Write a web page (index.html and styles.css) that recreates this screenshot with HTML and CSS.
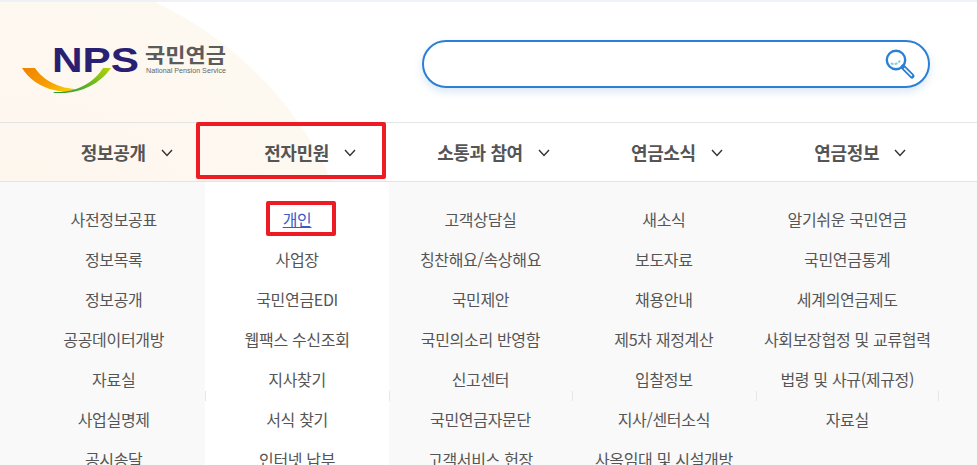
FILE: index.html
```html
<!DOCTYPE html>
<html lang="ko">
<head>
    <meta charset="UTF-8">
    <title>국민연금공단</title>
    <link rel="stylesheet" href="styles.css">
</head>
<body>
    <div class="page">
        <div class="top">
            <header class="header">
                <a class="logo" href="#">
                    <svg width="210" height="52" viewBox="0 0 210 52">
                        <defs>
                            <linearGradient id="swooshOrange" x1="0" y1="0" x2="1" y2="0.6">
                                <stop offset="0" stop-color="#f08300"/>
                                <stop offset="0.6" stop-color="#f59c00"/>
                                <stop offset="1" stop-color="#fbc600"/>
                            </linearGradient>
                            <linearGradient id="swooshGreen" x1="1" y1="0" x2="0" y2="1">
                                <stop offset="0" stop-color="#b5d20a"/>
                                <stop offset="0.55" stop-color="#5fb525"/>
                                <stop offset="1" stop-color="#1f9a38"/>
                            </linearGradient>
                        </defs>
                        <path d="M0 24 L13 24 C21 36 37 45 56 45 C46 48 38 48 32 46 C18 43 7 35 0 24Z" fill="url(#swooshOrange)"/>
                        <path d="M81 24 L89 24 C78 40 58 50 36 49 C33 49 32 49 31 48 C56 49 72 38 81 24Z" fill="url(#swooshGreen)"/>
                        <text class="logo-nps" x="30" y="28" textLength="87" lengthAdjust="spacingAndGlyphs">NPS</text>
                        <text class="logo-ko" x="123" y="19" textLength="81" lengthAdjust="spacingAndGlyphs">국민연금</text>
                        <text class="logo-en" x="124" y="29" textLength="80" lengthAdjust="spacingAndGlyphs">National Pension Service</text>
                    </svg>
                </a>
                <form class="search">
                    <button class="search-btn" type="button" aria-label="검색">
                        <svg width="32" height="32" viewBox="0 0 32 32" fill="none">
                            <circle cx="12" cy="12" r="9.2" stroke="#2b7fd4" stroke-width="2.4"/>
                            <path d="M6.8 15.2 C9 16.6 13.5 16.6 16 12.4" stroke="#85d3da" stroke-width="2" stroke-dasharray="3 1"/>
                            <path d="M19 19 L28 28" stroke="#2b7fd4" stroke-width="5" stroke-linecap="round"/>
                            <path d="M20.5 20.5 L27.5 27.5" stroke="#fff" stroke-width="1.4" stroke-linecap="round"/>
                        </svg>
                    </button>
                </form>
            </header>
            <nav class="nav">
                <a class="nav-item" href="#">정보공개<svg class="chev" width="12" height="8" viewBox="0 0 12 8"><path d="M1 1 L6 6.5 L11 1" fill="none" stroke="#333" stroke-width="1.4"/></svg></a>
                <a class="nav-item" href="#">전자민원<svg class="chev" width="12" height="8" viewBox="0 0 12 8"><path d="M1 1 L6 6.5 L11 1" fill="none" stroke="#333" stroke-width="1.4"/></svg></a>
                <a class="nav-item" href="#">소통과 참여<svg class="chev" width="12" height="8" viewBox="0 0 12 8"><path d="M1 1 L6 6.5 L11 1" fill="none" stroke="#333" stroke-width="1.4"/></svg></a>
                <a class="nav-item" href="#">연금소식<svg class="chev" width="12" height="8" viewBox="0 0 12 8"><path d="M1 1 L6 6.5 L11 1" fill="none" stroke="#333" stroke-width="1.4"/></svg></a>
                <a class="nav-item" href="#">연금정보<svg class="chev" width="12" height="8" viewBox="0 0 12 8"><path d="M1 1 L6 6.5 L11 1" fill="none" stroke="#333" stroke-width="1.4"/></svg></a>
            </nav>
        </div>
        <div class="menu">
            <ul class="col">
                <li><a href="#">사전정보공표</a></li>
                <li><a href="#">정보목록</a></li>
                <li><a href="#">정보공개</a></li>
                <li><a href="#">공공데이터개방</a></li>
                <li><a href="#">자료실</a></li>
                <li><a href="#">사업실명제</a></li>
                <li><a href="#">공시송달</a></li>
            </ul>
            <ul class="col col-on">
                <li><a class="current" href="#">개인</a></li>
                <li><a href="#">사업장</a></li>
                <li><a href="#">국민연금EDI</a></li>
                <li><a href="#">웹팩스 수신조회</a></li>
                <li><a href="#">지사찾기</a></li>
                <li><a href="#">서식 찾기</a></li>
                <li><a href="#">인터넷 납부</a></li>
            </ul>
            <ul class="col">
                <li><a href="#">고객상담실</a></li>
                <li><a href="#">칭찬해요/속상해요</a></li>
                <li><a href="#">국민제안</a></li>
                <li><a href="#">국민의소리 반영함</a></li>
                <li><a href="#">신고센터</a></li>
                <li><a href="#">국민연금자문단</a></li>
                <li><a href="#">고객서비스 헌장</a></li>
            </ul>
            <ul class="col">
                <li><a href="#">새소식</a></li>
                <li><a href="#">보도자료</a></li>
                <li><a href="#">채용안내</a></li>
                <li><a href="#">제5차 재정계산</a></li>
                <li><a href="#">입찰정보</a></li>
                <li><a href="#">지사/센터소식</a></li>
                <li><a href="#">사옥임대 및 시설개방</a></li>
            </ul>
            <ul class="col">
                <li><a href="#">알기쉬운 국민연금</a></li>
                <li><a href="#">국민연금통계</a></li>
                <li><a href="#">세계의연금제도</a></li>
                <li><a href="#">사회보장협정 및 교류협력</a></li>
                <li><a href="#">법령 및 사규(제규정)</a></li>
                <li><a href="#">자료실</a></li>
            </ul>
        </div>
        <div class="mark mark-nav"></div>
        <div class="mark mark-link"></div>
    </div>
</body>
</html>
```

FILE: styles.css
```css
* {
    margin: 0;
    padding: 0;
    box-sizing: border-box;
}

html, body {
    width: 100%;
    height: 100%;
    overflow: hidden;
}

body {
    font-family: "Noto Sans CJK KR", "Noto Sans", sans-serif;
    background-color: #fff;
    color: #555;
}

a {
    color: inherit;
    text-decoration: none;
}

ul {
    list-style: none;
}

.page {
    position: relative;
    height: 465px;
    overflow: hidden;
    border-top: 2px solid #eef2f6;
}

.top {
    background: radial-gradient(circle 365px at 0 330px, #fdf7ee 0, #fdf8f0 99.7%, transparent 100%);
}

.header {
    height: 120px;
    display: flex;
    align-items: flex-start;
    padding: 38px 0 0 22px;
}

.logo {
    display: block;
    width: 210px;
    height: 52px;
    margin-top: 4px;
}

.logo svg {
    display: block;
    overflow: visible;
}

.logo-nps {
    font-family: "Liberation Sans", sans-serif;
    font-size: 35px;
    font-weight: 700;
    fill: #2a2073;
}

.logo-ko {
    font-size: 20px;
    font-weight: 700;
    fill: #5b5b5b;
}

.logo-en {
    font-family: "Liberation Sans", sans-serif;
    font-size: 8px;
    fill: #666;
}

.search {
    width: 508px;
    height: 48px;
    margin-left: 190px;
    display: flex;
    justify-content: flex-end;
    align-items: center;
    padding-right: 12px;
    background-color: #fff;
    border: 2px solid #2b7fd4;
    border-radius: 24px;
    box-shadow: 0 4px 8px rgba(43, 127, 212, 0.18);
}

.search-btn {
    width: 32px;
    height: 32px;
    border: none;
    background: none;
}

.search-btn svg {
    display: block;
}

.nav {
    height: 60px;
    display: grid;
    grid-template-columns: repeat(5, 183.4px);
    padding-left: 22px;
    border-top: 1px solid #e4e4e4;
    border-bottom: 1px solid #e4e4e4;
}

.nav-item {
    display: flex;
    justify-content: center;
    align-items: center;
    gap: 15px;
    padding-left: 26px;
    font-size: 18px;
    font-weight: 700;
    letter-spacing: -0.02em;
    color: #555;
}

.chev {
    flex: none;
    margin-top: 1px;
}

.menu {
    height: 283px;
    display: grid;
    grid-template-columns: repeat(5, 183.4px);
    padding-left: 22px;
    background-color: #f9f9f9;
}

.col {
    position: relative;
    padding-top: 17px;
}

.col-on {
    background-color: #fff;
}

.col + .col::before,
.col:last-child::after {
    content: "";
    position: absolute;
    top: 209px;
    width: 1px;
    height: 10px;
    background-color: #e6e6e6;
}

.col + .col::before {
    left: 0;
}

.col:last-child::after {
    right: 0;
}

.col li {
    height: 40px;
    line-height: 40px;
    text-align: center;
    font-size: 16px;
    letter-spacing: -0.02em;
    white-space: nowrap;
}

.col .current {
    color: #3a5bc7;
    text-decoration: underline;
}

.mark {
    position: absolute;
    border: 4px solid #ed1c24;
    border-radius: 2px;
}

.mark-nav {
    left: 196px;
    top: 120px;
    width: 190px;
    height: 57px;
}

.mark-link {
    left: 266px;
    top: 199px;
    width: 70px;
    height: 35px;
}
```
